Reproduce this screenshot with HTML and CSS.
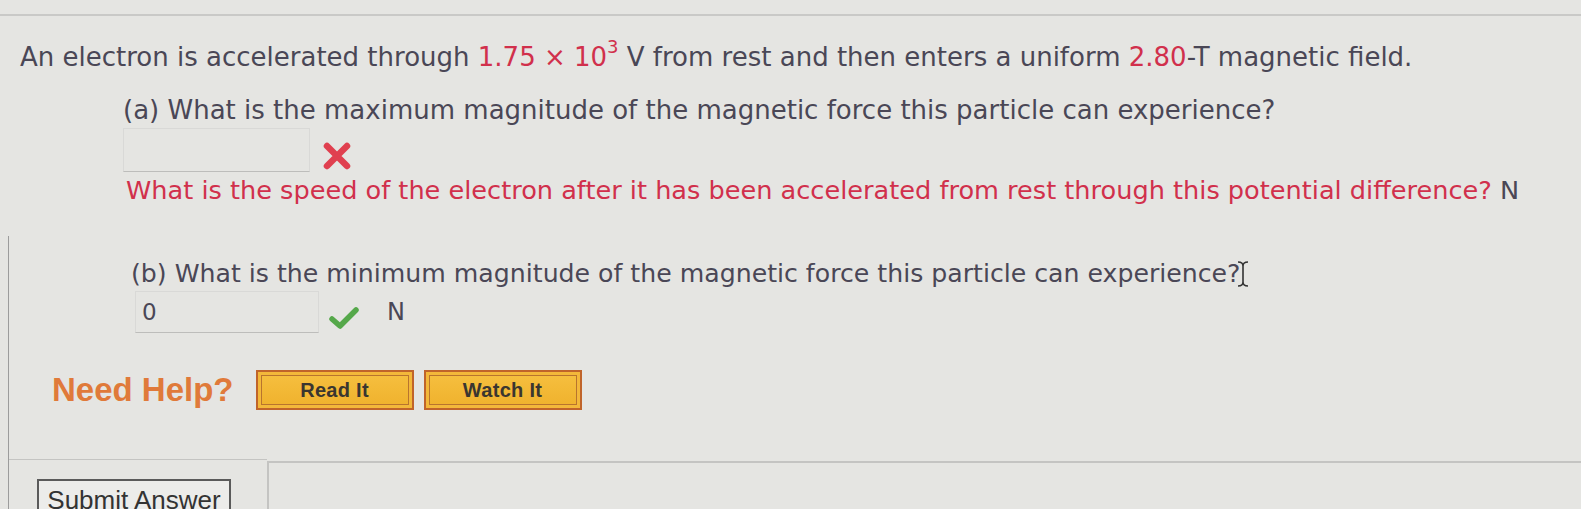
FILE: index.html
```html
<!DOCTYPE html>
<html>
<head>
<meta charset="utf-8">
<link rel="stylesheet" href="styles.css">
</head>
<body>
<div class="topline"></div>
<div class="question">
  <p class="intro">An electron is accelerated through <span class="red">1.75 &times; 10<sup>3</sup></span> V from rest and then enters a uniform <span class="red">2.80</span>-T magnetic field.</p>
  <div class="part part-a">
    <p class="prompt">(a) What is the maximum magnitude of the magnetic force this particle can experience?</p>
    <div class="answer-row">
      <div class="input"></div>
      <svg class="mark cross" width="30" height="30" viewBox="0 0 30 30"><path d="M5 5 L25 25 M25 5 L5 25" stroke="#e0404f" stroke-width="6.5" stroke-linecap="round"/></svg>
    </div>
    <p class="hint"><span class="red">What is the speed of the electron after it has been accelerated from rest through this potential difference?</span> N</p>
  </div>
  <div class="lower">
    <div class="part part-b">
      <p class="prompt">(b) What is the minimum magnitude of the magnetic force this particle can experience?<svg class="ibeam" width="14" height="28" viewBox="0 0 14 28"><path d="M2 2 Q7 2 7 6 L7 22 Q7 26 2 26 M12 2 Q7 2 7 6 M7 22 Q7 26 12 26" fill="none" stroke="#333" stroke-width="1.6"/></svg></p>
      <div class="answer-row">
        <div class="input filled">0</div>
        <svg class="mark check" width="30" height="24" viewBox="0 0 30 24"><path d="M3 13 L11 20 L27 4" fill="none" stroke="#55a84a" stroke-width="5.5" stroke-linecap="round" stroke-linejoin="round"/></svg>
        <span class="unit">N</span>
      </div>
    </div>
    <div class="help">
      <span class="need">Need Help?</span>
      <button class="helpbtn">Read It</button>
      <button class="helpbtn">Watch It</button>
    </div>
    <div class="footer">
      <div class="submit-cell"><button class="submit">Submit Answer</button></div>
      <div class="footbox"></div>
    </div>
  </div>
</div>
</body>
</html>
```

FILE: styles.css
```css
html, body {
  margin: 0;
  padding: 0;
  background: #e5e5e2;
  height: 509px;
  overflow: hidden;
}
.topline {
  margin-top: 14px;
  height: 2px;
  background: #c9c9c7;
}
.question {
  font-family: "DejaVu Sans", Verdana, sans-serif;
  font-size: 26px;
  line-height: 32px;
  color: #4a4756;
  padding-left: 20px;
}
p { margin: 0; white-space: nowrap; }
.red { color: #d1304c; }
sup {
  font-size: 18px;
  line-height: 0;
  vertical-align: 0;
  position: relative;
  top: -13px;
}
.intro {
  margin-top: 25px;
}
.part-a {
  padding-left: 103px;
  margin-top: 21px;
}
.answer-row {
  display: flex;
  align-items: center;
}
.part-a .answer-row {
  margin-top: 2px;
  height: 44px;
}
.input {
  width: 187px;
  height: 44px;
  border: 1px solid #d9d9d7;
  border-bottom-color: #bdbdbb;
  box-sizing: border-box;
}
.cross { margin-left: 12px; margin-top: 12px; }
.hint {
  margin-top: 2px;
  padding-left: 3px;
  font-size: 25.6px;
}
.lower {
  border-left: 1px solid #9c9c9c;
  margin-left: -12px;
  margin-top: 30px;
  padding-top: 22px;
}
.part-b { padding-left: 122px; }
.part-b .prompt { font-size: 25.2px; }
.ibeam { vertical-align: -6px; margin-left: -4px; }
.part-b .answer-row { margin-top: 1px; height: 42px; }
.input.filled {
  width: 184px;
  height: 42px;
  margin-left: 4px;
  padding-left: 6px;
  line-height: 40px;
  font-size: 23px;
}
.check { margin-left: 10px; margin-top: 12px; }
.unit { margin-left: 28px; font-size: 24px; }
.help {
  display: flex;
  align-items: center;
  margin-top: 37px;
  padding-left: 43px;
  height: 40px;
}
.need {
  font-family: "Liberation Sans", Arial, sans-serif;
  font-weight: bold;
  font-size: 33px;
  color: #e07a3a;
  margin-right: 22px;
}
.helpbtn {
  width: 158px;
  height: 40px;
  margin-right: 10px;
  border: 2px solid #c0642a;
  background: linear-gradient(#f6c040, #efb12c);
  box-shadow: inset 0 0 0 3px #f3b83a, inset 0 0 0 4px #b8742e;
  font-family: "Liberation Sans", Arial, sans-serif;
  font-weight: bold;
  font-size: 20px;
  letter-spacing: 0.3px;
  color: #3a3630;
  padding: 0;
}
.footer {
  display: flex;
  margin-top: 49px;
}
.submit-cell {
  width: 258px;
  border-top: 1px solid #c4c4c2;
  padding-top: 19px;
  padding-left: 28px;
  box-sizing: border-box;
}
.footbox {
  flex: 1;
  margin-top: 2px;
  height: 60px;
  border-top: 2px solid #c4c4c2;
  border-left: 2px solid #c4c4c2;
}
.submit {
  width: 194px;
  height: 40px;
  border: 2px solid #5a5a5a;
  background: #ececea;
  font-family: "Liberation Sans", Arial, sans-serif;
  font-size: 26px;
  color: #333;
  padding: 3px 0 0 0;
  vertical-align: top;
  overflow: hidden;
}
```
